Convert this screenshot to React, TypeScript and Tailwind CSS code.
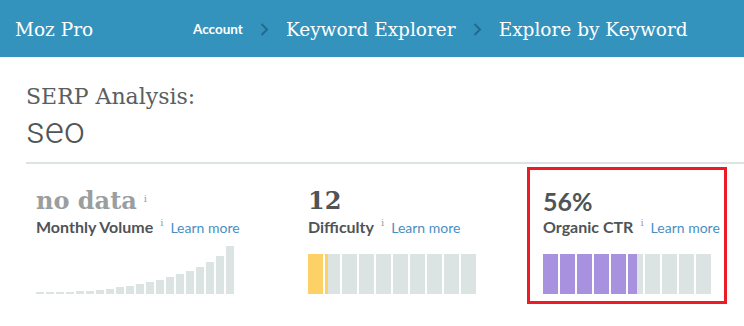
import React from 'react';

const slab = { fontFamily: '"DejaVu Serif", "Liberation Serif", serif' };
const lato = { fontFamily: 'Lato, "Open Sans", sans-serif' };

// monthly volume bars, heights in px (no data, so just the placeholder shape)
const volumeBars = [2, 2, 2, 2, 3, 3, 4, 5, 7, 8, 10, 12, 14, 17, 20, 23, 27, 32, 38, 48];

const Chevron = () => (
  <svg width="9" height="13" viewBox="0 0 9 13" className="mx-[17px]">
    <polyline points="1.5,1 7,6.5 1.5,12" fill="none" stroke="#1f6a8f" strokeWidth="2" />
  </svg>
);

const Info = () => (
  <span className="text-[10px] text-[#9aa1a3] relative -top-[7px] ml-[7px]" style={slab}>
    i
  </span>
);

const ScoreBar = ({ value, color }: { value: number; color: string }) => {
  // value is a percentage, 10 segments of 15px
  return (
    <div className="flex gap-[2px] mt-[17px]">
      {Array.from({ length: 10 }).map((_, i) => {
        const fill = Math.max(0, Math.min(1, value / 10 - i));
        return (
          <div key={i} className="w-[15px] h-[40px] bg-[#dce3e3]">
            <div className="h-full" style={{ width: `${fill * 100}%`, background: color }} />
          </div>
        );
      })}
    </div>
  );
};

const Label = ({ text }: { text: string }) => (
  <div className="h-[20px] leading-[20px] flex items-baseline whitespace-nowrap" style={lato}>
    <span className="text-[16px] font-bold text-[#4f5456]">{text}</span>
    <Info />
    <a className="ml-[7px] text-[14px] text-[#4a8fbf]">Learn more</a>
  </div>
);

export default function App() {
  return (
    <div className="w-[744px] h-[326px] bg-white overflow-hidden">
      <div className="h-[57px] bg-[#3493bc] flex items-center pl-[15px] pt-[2px] text-white">
        <div className="w-[178px] text-[18.5px] font-light" style={slab}>
          Moz Pro
        </div>
        <span className="text-[13.5px] font-bold" style={lato}>
          Account
        </span>
        <Chevron />
        <span className="text-[18.5px]" style={slab}>
          Keyword Explorer
        </span>
        <Chevron />
        <span className="text-[18.5px]" style={slab}>
          Explore by Keyword
        </span>
      </div>

      <div className="pl-[26px] pt-[26px]">
        <div className="text-[22px] leading-[28px] text-[#5a5f61]" style={slab}>
          SERP Analysis:
        </div>
        <div
          className="text-[37px] leading-[40px] font-light text-[#505557]"
          style={{ fontFamily: 'Roboto, sans-serif' }}
        >
          seo
        </div>
        <div className="mt-[11px] h-[2px] bg-[#dde3e3]" />
      </div>

      <div className="flex pl-[36px] mt-[3px]">
        <div className="w-[272px] pt-[18px]">
          <div className="h-[32px] leading-[32px] flex items-baseline">
            <span className="text-[24px] font-bold text-[#9a9e9f]" style={slab}>
              no data
            </span>
            <Info />
          </div>
          <Label text="Monthly Volume" />
          <div className="flex items-end gap-[2px] h-[48px] mt-[9px]">
            {volumeBars.map((h, i) => (
              <div key={i} className="w-[8px] bg-[#dce3e3]" style={{ height: h }} />
            ))}
          </div>
        </div>

        <div className="w-[219px] pt-[18px]">
          <div className="h-[32px] leading-[32px]">
            <span className="text-[24px] font-bold text-[#4f5456]" style={slab}>
              12
            </span>
          </div>
          <Label text="Difficulty" />
          <ScoreBar value={12} color="#fed166" />
        </div>

        <div className="w-[200px] h-[137px] border-[3px] border-[#ed1c24] pt-[15px] pl-[13px]">
          <div className="h-[32px] leading-[32px]">
            <span className="text-[25px] font-bold text-[#4f5456]" style={lato}>
              56%
            </span>
          </div>
          <Label text="Organic CTR" />
          <ScoreBar value={56} color="#a892e0" />
        </div>
      </div>
    </div>
  );
}
